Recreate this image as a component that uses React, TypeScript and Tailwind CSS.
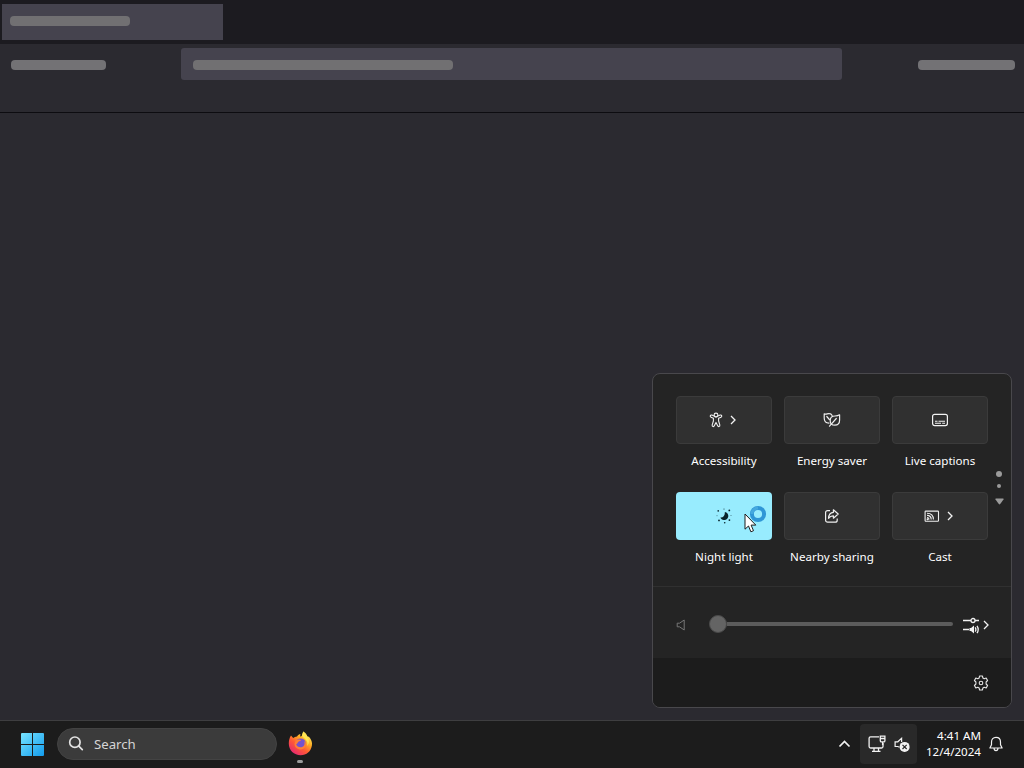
import React from 'react';

function ChevronRight() {
  return (
    <svg width="6" height="10" viewBox="0 0 6 10" fill="none" stroke="#f2f2f2" strokeWidth="1.3">
      <path d="M1 1l4 4-4 4" />
    </svg>
  );
}

function AccessibilityIcon() {
  return (
    <svg width="14" height="16" viewBox="0 0 14 16" fill="none" stroke="#eeeeee" strokeWidth="1.1" strokeLinejoin="round">
      <circle cx="7" cy="3" r="1.9" />
      <path d="M5.1 4.1L2.8 3.1C1.3 2.6.6 4.6 2 5.2L4.4 6.3V9L3.2 12.9C2.8 14.7 4.8 15.1 5.3 13.8L7 10.4L8.7 13.8C9.2 15.1 11.2 14.7 10.8 12.9L9.6 9V6.3L12 5.2C13.4 4.6 12.7 2.6 11.2 3.1L8.9 4.1C8 5.2 6 5.2 5.1 4.1Z" />
    </svg>
  );
}

function EnergyIcon() {
  return (
    <svg width="18" height="16" viewBox="0 0 18 16" fill="none" stroke="#eeeeee" strokeWidth="1.2" strokeLinecap="round" strokeLinejoin="round">
      <path d="M6 11.1C3 11.1 1.2 9 1.2 6V1.8C3.2 3 4.6 1 6.8 1.7C8 2 8.7 2.7 9.1 3.5" />
      <path d="M3.8 4.5L6.4 7.5" />
      <path d="M16.6 2.8V8C16.6 11.3 14.8 13.2 11.8 13.2C9 13.2 7.2 11.5 7.2 8.7C7.2 5.6 9.3 4 12 4C14 4 15.3 3.7 16.6 2.8Z" />
      <path d="M13.3 6.5L6.5 14.2" />
    </svg>
  );
}

function CaptionsIcon() {
  return (
    <svg width="16" height="14" viewBox="0 0 16 14" fill="none" stroke="#f2f2f2" strokeWidth="1.2">
      <rect x="0.6" y="1.4" width="14.8" height="11.2" rx="2" />
      <path d="M3 8.2h2.5M6.5 8.2h6.5M3 10.3h6M10.2 10.3h2.8" strokeWidth="1.1" />
    </svg>
  );
}

function NightIcon() {
  return (
    <svg width="16" height="16" viewBox="0 0 16 16" fill="#08232b">
      <path d="M8.8 3.9A4.1 4.1 0 1 1 4.4 9.5C7.1 9.9 9.2 7.2 8.8 3.9Z" />
      <circle cx="2.2" cy="2.9" r="0.8" />
      <circle cx="8" cy="1" r="0.5" />
      <circle cx="13.3" cy="2.4" r="0.9" />
      <circle cx="1" cy="7.8" r="0.45" />
      <circle cx="15" cy="7.5" r="0.45" />
      <circle cx="3" cy="12.4" r="0.9" />
      <circle cx="13.4" cy="12.1" r="0.9" />
      <circle cx="8.7" cy="14.8" r="0.8" />
    </svg>
  );
}

function ShareIcon() {
  return (
    <svg width="16" height="16" viewBox="0 0 16 16" fill="none" stroke="#eeeeee" strokeWidth="1.2" strokeLinejoin="round">
      <path d="M6 2.6H3.6A2 2 0 0 0 1.6 4.6v7.6a2 2 0 0 0 2 2h7.6a2 2 0 0 0 2-2V10.6" />
      <path d="M9.4 1.8L14.2 6L9.4 10.2V7.9C7.3 7.8 5.8 8.6 4.5 10.3C4.7 6.9 6.5 4.5 9.4 4.3Z" />
    </svg>
  );
}

function CastIcon() {
  return (
    <svg width="16" height="14" viewBox="0 0 16 14" fill="none" stroke="#eeeeee" strokeWidth="1.1">
      <rect x="1.1" y="2.1" width="13.4" height="10.2" rx="0.7" />
      <path d="M3 4.3c3.8 0 6.4 2.4 6.4 6.2M3 6.4c2.5 0 4.2 1.6 4.2 4.1M3 8.5c1.2 0 2 .8 2 2" />
      <circle cx="3.6" cy="10.2" r="0.5" fill="#eeeeee" />
    </svg>
  );
}

function Cursor() {
  return (
    <svg className="absolute left-[68px] top-[21px]" width="13" height="21" viewBox="0 0 13 21">
      <path d="M1 1V16.2L4.5 13L6.9 18.8L9.5 17.7L7.1 12.1H11.8Z" fill="#ffffff" stroke="#1d1d1d" strokeWidth="1" />
    </svg>
  );
}

function Spinner() {
  return (
    <svg className="absolute left-[73px] top-[13px]" width="18" height="18" viewBox="0 0 18 18" fill="none">
      <circle cx="9" cy="9" r="6.1" stroke="#2f96d6" strokeWidth="4" />
      <path d="M2.9 9A6.1 6.1 0 0 1 9 2.9" stroke="#45a9df" strokeWidth="3" />
    </svg>
  );
}

const tiles = [
  { label: 'Accessibility', icon: <AccessibilityIcon />, more: true },
  { label: 'Energy saver', icon: <EnergyIcon /> },
  { label: 'Live captions', icon: <CaptionsIcon /> },
  { label: 'Night light', icon: <NightIcon />, active: true },
  { label: 'Nearby sharing', icon: <ShareIcon /> },
  { label: 'Cast', icon: <CastIcon />, more: true },
];

function tileClass(tile) {
  if (tile.active) return 'relative flex h-12 w-24 items-center justify-center rounded bg-[#98ecfe]';
  if (tile.more) return 'flex h-12 w-24 items-center justify-center gap-[7px] rounded border border-[#3b3b3b] bg-[#303030] pr-1';
  return 'flex h-12 w-24 items-center justify-center rounded border border-[#3b3b3b] bg-[#303030]';
}

function QuickSettings() {
  return (
    <div className="absolute right-3 bottom-[60px] flex h-[335px] w-[360px] flex-col overflow-hidden rounded-lg border border-[#49484c] bg-[#242424]">
      <div className="flex h-[213px] border-b border-[#303030] pt-[22px] pl-[23px]">
        <div className="grid grid-cols-3 content-start gap-x-3 gap-y-[23px]">
          {tiles.map((tile) => (
            <div key={tile.label} className="flex w-24 flex-col items-center">
              <div className={tileClass(tile)}>
                {tile.icon}
                {tile.more && <ChevronRight />}
                {tile.active && <Spinner />}
                {tile.active && <Cursor />}
              </div>
              <span className="mt-[9px] h-4 text-[11.6px] leading-4 whitespace-nowrap text-white">{tile.label}</span>
            </div>
          ))}
        </div>
        <div className="ml-[7px] flex w-2 flex-col items-center pt-[75px]">
          <div className="size-[6px] rounded-full bg-[#9b9b9b]" />
          <div className="mt-[7px] size-1 rounded-full bg-[#9b9b9b]" />
          <svg className="mt-[10px]" width="9" height="7" viewBox="0 0 9 7">
            <path d="M1 .5h7q1 0 .5 1L5.2 6q-.7.8-1.4 0L.5 1.5Q0 .5 1 .5Z" fill="#9b9b9b" />
          </svg>
        </div>
      </div>

      <div className="flex h-[71px] items-center pt-[3px] pl-[23px]">
        <svg className="mt-[2px]" width="11" height="12" viewBox="0 0 11 12" fill="none" stroke="#777777" strokeWidth="1">
          <path d="M1.2 4.2H3.5L8.2 1V11L3.5 7.8H1.2Z" />
        </svg>
        <div className="ml-[22px] flex w-[244px] items-center">
          <div className="size-[18px] shrink-0 rounded-full border border-[#4a4a4a] bg-[#646464]" />
          <div className="h-1 flex-1 rounded-r-full bg-[#5c5c5c]" />
        </div>
        <svg className="mt-[2px] ml-[9px]" width="18" height="18" viewBox="0 0 18 18" fill="none" stroke="#f2f2f2" strokeWidth="1.3">
          <path d="M1 4.5h8M13 4.5h4M1 13.5h6" />
          <circle cx="11" cy="4.5" r="2" />
          <path d="M7.5 12H9l3-2.5v8L9 15H7.5Z" fill="#f2f2f2" stroke="none" />
          <path d="M13.2 11.3c.8 1.3.8 3.1 0 4.4M15 9.8c1.5 2.3 1.5 5.1 0 7.4" />
        </svg>
        <div className="mt-[2px] ml-[3px]">
          <ChevronRight />
        </div>
      </div>

      <div className="flex flex-1 items-center justify-end bg-[#1c1c1c] pr-[22px]">
        <svg width="16" height="16" viewBox="0 0 16 16" fill="none" stroke="#e3e3e3" strokeWidth="1.1" strokeLinejoin="round">
          <path d="M6.6 1h2.8l.5 2 1.3.8 2-.7 1.4 2.4-1.5 1.5v2l1.5 1.5-1.4 2.4-2-.7-1.3.8-.5 2H6.6l-.5-2-1.3-.8-2 .7-1.4-2.4L2.9 9V7L1.4 5.5l1.4-2.4 2 .7L6.1 3Z" />
          <circle cx="8" cy="8" r="1.8" />
        </svg>
      </div>
    </div>
  );
}

function FirefoxLogo() {
  return (
    <svg width="25" height="25" viewBox="0 0 25 25">
      <defs>
        <linearGradient id="fox" x1="0.85" y1="0.05" x2="0.2" y2="0.9">
          <stop offset="0" stopColor="#fff36b" />
          <stop offset="0.35" stopColor="#ffad22" />
          <stop offset="0.65" stopColor="#ff5a35" />
          <stop offset="1" stopColor="#e72c6c" />
        </linearGradient>
      </defs>
      <path d="M3 4.5L5.2 7C6.3 6 7.5 5.6 9 5.4C10 3.8 11.2 3.2 12.5 3C12 4 12.2 5 12.7 5.8C14.5 4.4 14.8 2.2 15.2.4C18.3 1.9 19 4.6 19.9 6.1L20.8 5.4C23.4 8.2 24.5 11.3 23.9 14.5C23 20.4 18.5 24.2 12.7 24.2C6 24.2.8 19.1.8 12.7C.8 10 1.4 6.8 3 4.5Z" fill="url(#fox)" />
      <circle cx="12.7" cy="12.4" r="5" fill="#7553ce" />
      <path d="M8.7 9C10.5 8 12.4 8.4 13.2 9.6L10.8 10.6C9.9 11.2 9.6 12.6 8.1 13.5C9.1 16.2 13.4 17.1 15.7 14.9C16.9 13.7 16.8 11.4 16 10C18.2 11.4 18.8 13.7 17.3 16.1C15.5 19.1 10.8 19.3 8.1 16.7C6 14.7 6 11 8.7 9Z" fill="#ff7f35" />
      <path d="M14.9 6C17.1 7.8 20.6 10.3 19.2 15C21.3 12.7 21.5 9.2 19.9 6.1L15.2.4C14.2 2.8 13.6 4.8 14.9 6Z" fill="#ffe552" />
    </svg>
  );
}

function Taskbar() {
  return (
    <div className="flex h-12 items-center border-t border-[#3e3e40] bg-[#1c1c1c] pb-[2px] pl-[21px]">
      <svg className="mt-[1px]" width="23" height="23" viewBox="0 0 23 23">
        <defs>
          <linearGradient id="win" x1="0" y1="0" x2="23" y2="23" gradientUnits="userSpaceOnUse">
            <stop offset="0" stopColor="#77e4ff" />
            <stop offset="1" stopColor="#129bed" />
          </linearGradient>
        </defs>
        <path d="M0 1q0-1 1-1h10v11H0ZM12 0h10q1 0 1 1v10H12ZM0 12h11v11H1q-1 0-1-1ZM12 12h11v10q0 1-1 1H12Z" fill="url(#win)" />
      </svg>

      <div className="ml-[13px] flex h-8 w-[220px] items-center rounded-full border border-[#434343] bg-[#3b3b3b] pl-[10px]">
        <svg width="17" height="17" viewBox="0 0 17 17" fill="none" stroke="#e2e2e2" strokeWidth="1.7" strokeLinecap="round">
          <circle cx="6.9" cy="7.2" r="5.2" />
          <path d="M10.8 11.1L14.3 14.6" />
        </svg>
        <span className="ml-[9px] text-[13.2px] leading-5 text-[#d5d5d5]">Search</span>
      </div>

      <div className="ml-[10px] flex h-full w-[26px] flex-col items-center pt-[10px]">
        <FirefoxLogo />
        <div className="mt-[4px] h-[3px] w-[6px] shrink-0 rounded-full bg-[#9d9d9d]" />
      </div>

      <svg className="ml-[525px]" width="13" height="8" viewBox="0 0 13 8" fill="none" stroke="#f2f2f2" strokeWidth="1.7">
        <path d="M1.5 6.5l5-5 5 5" />
      </svg>

      <div className="ml-[9px] flex h-10 w-[57px] items-center rounded bg-[#292929] pl-2">
        <svg width="18" height="18" viewBox="0 0 18 18" fill="none" stroke="#f2f2f2" strokeWidth="1.3">
          <path d="M11 1.8H2.6Q1.1 1.8 1.1 3.3V11.5Q1.1 13 2.6 13H13.5Q15 13 15 11.5V8M6 13v3M10.5 13v3M4 16.3h8.5" />
          <path d="M12.3 1.1h4.6v4.6q0 1.2-1.2 1.2h-2.2q-1.2 0-1.2-1.2ZM12.3 3.5h4.6M14.6 6.9v3" />
        </svg>
        <svg className="mt-[2px] ml-2" width="17" height="16" viewBox="0 0 17 16" fill="none" stroke="#f2f2f2" strokeWidth="1.2">
          <path d="M5.5 10.2L3.8 9.5H1.1V4.8H3.8L7.6 1.3V5" />
          <circle cx="10.6" cy="9.9" r="5" fill="#f2f2f2" stroke="none" />
          <path d="M8.5 7.8l4.2 4.2M12.7 7.8l-4.2 4.2" stroke="#292929" />
        </svg>
      </div>

      <div className="ml-1 flex w-[60px] flex-col items-end text-[11.6px] leading-4 text-white">
        <span>4:41 AM</span>
        <span className="whitespace-nowrap">12/4/2024</span>
      </div>

      <svg className="ml-2" width="14" height="16" viewBox="0 0 14 16" fill="none" stroke="#f2f2f2" strokeWidth="1.2" strokeLinejoin="round">
        <path d="M7 1.3C4.2 1.3 2.5 3.3 2.5 6V8.7L.9 12H13.1L11.5 8.7V6C11.5 3.3 9.8 1.3 7 1.3ZM5 12.2C5.2 15.3 8.8 15.3 9 12.2" />
      </svg>
    </div>
  );
}

export default function App() {
  return (
    <div className="relative flex h-screen w-screen flex-col overflow-hidden bg-[#2b2a30] font-['Noto_Sans','Open_Sans',sans-serif]">
      <div className="h-11 bg-[#1c1b20] pt-1 pl-[2px]">
        <div className="h-9 w-[221px] bg-[#45434e] pt-3 pl-2">
          <div className="h-[10px] w-30 rounded-[4px] bg-[#717072]" />
        </div>
      </div>
      <div className="flex h-[69px] items-start border-b border-[#0d0c10] pt-1 pl-[11px]">
        <div className="mt-3 h-[10px] w-[95px] rounded-[4px] bg-[#737275]" />
        <div className="ml-[75px] flex h-8 w-[661px] items-center rounded-[3px] bg-[#45434e] pt-[2px] pl-3">
          <div className="h-[10px] w-[260px] rounded-[4px] bg-[#717072]" />
        </div>
        <div className="mt-3 ml-[76px] h-[10px] w-[97px] rounded-[4px] bg-[#737275]" />
      </div>
      <div className="flex-1" />
      <Taskbar />
      <QuickSettings />
    </div>
  );
}
